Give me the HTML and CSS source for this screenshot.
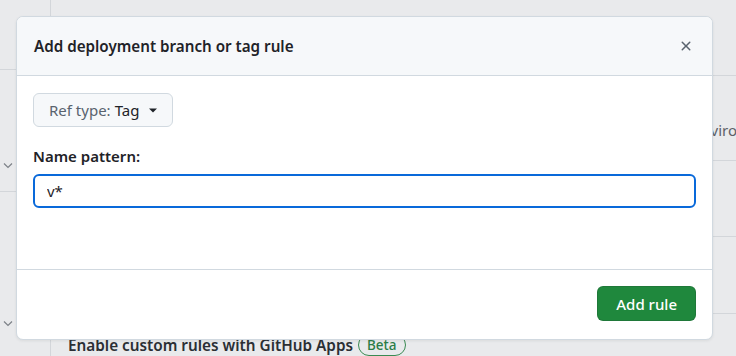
FILE: index.html
```html
<!DOCTYPE html>
<html lang="en">
<head>
    <meta charset="UTF-8">
    <meta name="viewport" content="width=device-width, initial-scale=1.0">
    <title>Add deployment branch or tag rule</title>
    <link rel="stylesheet" href="styles.css">
</head>
<body>
    <div class="page">
        <div class="sidebar">
            <div class="side-row side-top"></div>
            <div class="side-row side-mid">
                <svg class="chevron" width="12" height="12" viewBox="0 0 12 12"><path d="M2 4.5l4 4 4-4" fill="none" stroke="currentColor" stroke-width="1.2"/></svg>
            </div>
            <div class="side-row side-low">
                <svg class="chevron" width="12" height="12" viewBox="0 0 12 12"><path d="M2 4.5l4 4 4-4" fill="none" stroke="currentColor" stroke-width="1.2"/></svg>
            </div>
        </div>
        <div class="main">
            <div class="env-row row-1"></div>
            <div class="env-row row-2"><span class="env-text">Environments</span></div>
            <div class="env-row row-3"></div>
            <div class="env-row row-4"></div>
            <h3 class="apps-title">Enable custom rules with GitHub Apps <span class="beta">Beta</span></h3>
        </div>
    </div>

    <div class="dialog">
        <div class="dialog-header">
            <h2>Add deployment branch or tag rule</h2>
            <button class="close-btn" aria-label="Close">
                <svg width="16" height="16" viewBox="0 0 16 16"><path d="M3.72 3.72a.75.75 0 0 1 1.06 0L8 6.94l3.22-3.22a.75.75 0 1 1 1.06 1.06L9.06 8l3.22 3.22a.75.75 0 1 1-1.06 1.06L8 9.06l-3.22 3.22a.75.75 0 0 1-1.06-1.06L6.94 8 3.72 4.78a.75.75 0 0 1 0-1.06Z" fill="currentColor"/></svg>
            </button>
        </div>
        <div class="dialog-body">
            <button class="ref-btn">
                <span class="ref-label">Ref type:</span> <span class="ref-value">Tag</span>
                <svg class="caret" width="8" height="8" viewBox="0 0 8 8"><path d="M0 2.5h8L4 6.5Z" fill="currentColor"/></svg>
            </button>
            <label class="field-label" for="pattern">Name pattern:</label>
            <input class="field-input" id="pattern" type="text" value="v*">
        </div>
        <div class="dialog-footer">
            <button class="btn-primary">Add rule</button>
        </div>
    </div>
</body>
</html>
```

FILE: styles.css
```css
* {
    box-sizing: border-box;
}

body {
    margin: 0;
    font-family: "Noto Sans", "Liberation Sans", sans-serif;
    background-color: #e9eaec;
    color: #1f2328;
    overflow: hidden;
}

.page {
    display: flex;
    height: 356px;
}

.sidebar {
    width: 51px;
    flex-shrink: 0;
    border-right: 1px solid #d3d6da;
    display: flex;
    flex-direction: column;
}

.side-row {
    border-bottom: 1px solid #d3d6da;
    display: flex;
    align-items: flex-end;
    color: #7d8288;
}

.side-top {
    height: 70px;
}

.side-mid {
    height: 122px;
    padding: 0 0 20px 2px;
}

.side-low {
    flex: 1;
    border-bottom: none;
    align-items: flex-start;
    padding: 125px 0 0 2px;
}

.main {
    flex: 1;
    min-width: 0;
    padding-left: 17px;
    display: flex;
    flex-direction: column;
}

.env-row {
    border-bottom: 1px solid #d3d6da;
    margin-left: -17px;
    display: flex;
    align-items: center;
    overflow: hidden;
}

.row-1 {
    height: 76px;
}

.row-2 {
    height: 85px;
    padding-top: 24px;
}

.row-3 {
    height: 77px;
}

.row-4 {
    height: 77px;
}

.env-text {
    margin-left: 642px;
    font-size: 15px;
    color: #5c6168;
    white-space: nowrap;
}

.apps-title {
    margin: 20px 0 0;
    font-size: 15.3px;
    font-weight: 600;
    color: #2b2f34;
    display: flex;
    align-items: center;
    gap: 5px;
    white-space: nowrap;
}

.beta {
    font-size: 13.5px;
    font-weight: 500;
    color: #2c7d47;
    border: 1px solid #3a8a52;
    border-radius: 12px;
    padding: 0 8px;
    line-height: 20px;
}

.dialog {
    position: absolute;
    left: 16px;
    top: 16px;
    width: 697px;
    height: 324px;
    background-color: #fff;
    border: 1px solid #d1d9e0;
    border-radius: 7px;
    box-shadow: 0 1px 3px rgba(31, 35, 40, 0.08);
    display: flex;
    flex-direction: column;
    overflow: hidden;
}

.dialog-header {
    height: 59px;
    background-color: #f6f8fa;
    border-bottom: 1px solid #d1d9e0;
    display: flex;
    align-items: center;
    justify-content: space-between;
    padding: 0 10px 0 17px;
}

.dialog-header h2 {
    margin: 0;
    font-size: 15.2px;
    font-weight: 600;
    color: #1f2328;
}

.close-btn {
    width: 32px;
    height: 32px;
    border: none;
    background: none;
    padding: 0;
    color: #59636e;
    display: flex;
    align-items: center;
    justify-content: center;
}

.dialog-body {
    flex: 1;
    padding: 17px 16px 16px;
    display: flex;
    flex-direction: column;
    align-items: flex-start;
}

.ref-btn {
    height: 34px;
    padding: 0 15px;
    font-family: inherit;
    font-size: 15px;
    background-color: #f6f8fa;
    border: 1px solid #d1d9e0;
    border-radius: 6px;
    display: flex;
    align-items: center;
    gap: 4px;
}

.ref-label {
    color: #59636e;
}

.ref-value {
    color: #1f2328;
}

.caret {
    margin-left: 6px;
    color: #1f2328;
}

.field-label {
    margin-top: 19px;
    font-size: 15px;
    font-weight: 600;
    color: #1f2328;
}

.field-input {
    margin-top: 8px;
    width: 100%;
    height: 34px;
    padding: 0 12px;
    font-family: inherit;
    font-size: 15px;
    color: #1f2328;
    border: 2px solid #0969da;
    border-radius: 6px;
    outline: none;
}

.dialog-footer {
    height: 70px;
    border-top: 1px solid #d1d9e0;
    display: flex;
    justify-content: flex-end;
    align-items: flex-start;
    padding: 16px 16px 0;
}

.btn-primary {
    height: 35px;
    padding: 0 18px;
    font-family: inherit;
    font-size: 15px;
    font-weight: 500;
    color: #fff;
    background-color: #1f883d;
    border: 1px solid rgba(31, 35, 40, 0.15);
    border-radius: 6px;
}
```
